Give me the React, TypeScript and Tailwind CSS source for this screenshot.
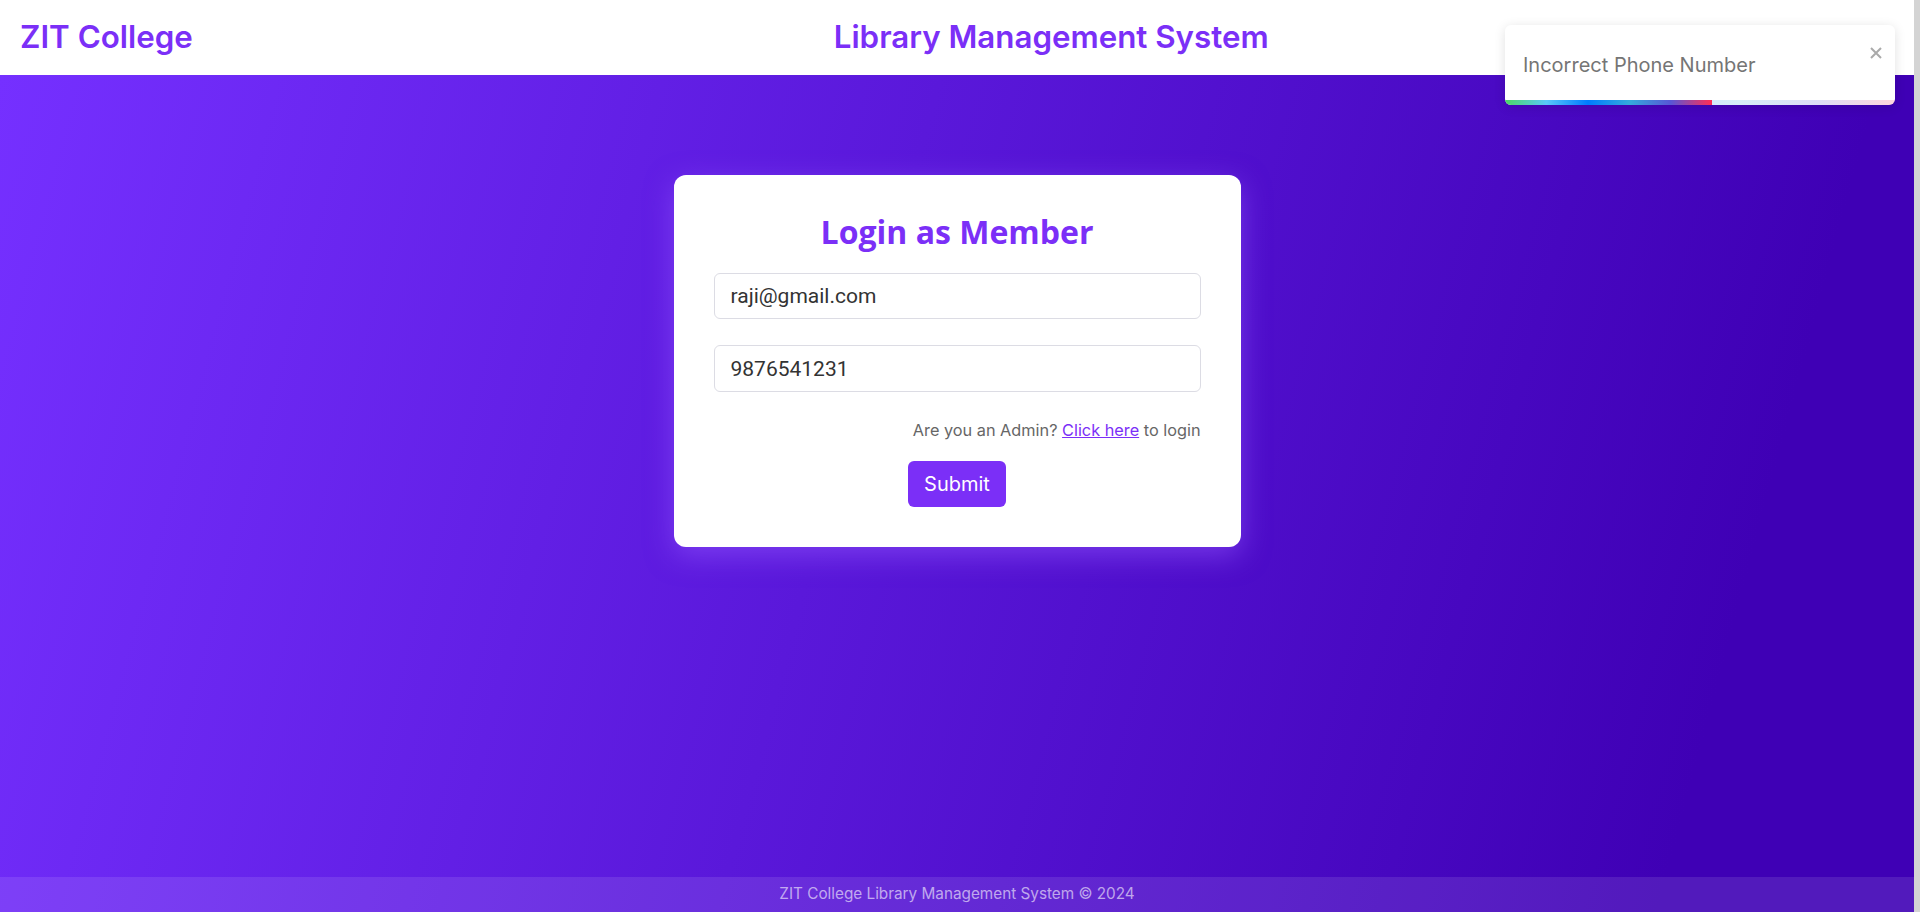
const purple = "#7b2ff7";

function Toast() {
  return (
    <div className="absolute right-[19px] top-[25px] z-20 flex h-[80px] w-[390px] items-center overflow-hidden rounded-md bg-white pl-[18px] shadow-[0_2px_12px_rgba(0,0,0,0.12)]">
      <span className="font-['Inter',sans-serif] text-[20px] text-[#757575]">
        Incorrect Phone Number
      </span>
      <button
        type="button"
        className="absolute right-[13px] top-[22px] text-[#aaaaaa]"
        aria-label="close"
      >
        <svg width="12" height="12" viewBox="0 0 12 12">
          <path d="M1 1L11 11M11 1L1 11" stroke="currentColor" strokeWidth="2" />
        </svg>
      </button>
      <div className="absolute bottom-0 left-0 h-[5px] w-full bg-[linear-gradient(to_right,#4cd964,#5ac8fa,#007aff,#34aadc,#5856d6,#ff2d55)] opacity-20" />
      <div className="absolute bottom-0 left-0 h-[5px] w-[207px] bg-[linear-gradient(to_right,#4cd964,#5ac8fa,#007aff,#34aadc,#5856d6,#ff2d55)]" />
    </div>
  );
}

function LoginCard() {
  return (
    <div className="w-[567px] rounded-xl bg-white px-10 pb-10 pt-[37px] shadow-[0_8px_28px_rgba(150,90,255,0.55)]">
      <h2
        className="mb-[21px] text-center font-['Open_Sans',sans-serif] text-[32px] font-bold leading-[40px]"
        style={{ color: purple }}
      >
        Login as Member
      </h2>
      <div className="flex flex-col gap-[26px]">
        <input
          defaultValue="raji@gmail.com"
          className="h-[46px] w-full rounded-md border border-[#dcdce4] px-4 font-['Roboto',sans-serif] text-[21px] text-[#333] outline-none"
        />
        <input
          defaultValue="9876541231"
          className="h-[47px] w-full rounded-md border border-[#dcdce4] px-4 font-['Roboto',sans-serif] text-[21px] text-[#333] outline-none"
        />
      </div>
      <p className="mt-[26px] text-right font-['Inter',sans-serif] text-[16.3px] leading-[24px] text-[#666]">
        Are you an Admin?{" "}
        <a href="#" className="text-[#7b2ff7] underline">
          Click here
        </a>{" "}
        to login
      </p>
      <div className="mt-[19px] flex justify-center">
        <button
          type="button"
          className="h-[46px] rounded-md bg-[#7b2ff7] px-4 font-['Inter',sans-serif] text-[20px] text-white"
        >
          Submit
        </button>
      </div>
    </div>
  );
}

export default function App() {
  return (
    <div className="flex h-[912px] w-full overflow-hidden">
      <div className="relative flex flex-1 flex-col">
        <header className="flex h-[75px] shrink-0 items-center bg-white px-5 font-['Inter',sans-serif] text-[31.3px] font-semibold text-[#7b2ff7]">
          <h1>ZIT College</h1>
          <h1 className="ml-[641px]">Library Management System</h1>
        </header>
        <Toast />
        <div className="flex flex-1 flex-col bg-[linear-gradient(105deg,#7530ff,#3f00b5_88%)]">
          <main className="flex flex-1 justify-center pt-[100px]">
            <div>
              <LoginCard />
            </div>
          </main>
          <footer className="flex h-[35px] items-center justify-center bg-white/10 font-['Inter',sans-serif] text-[15.3px] text-white/60">
            ZIT College Library Management System © 2024
          </footer>
        </div>
      </div>
      <div className="w-[6px] shrink-0 bg-[#d4d4d4]" />
    </div>
  );
}
